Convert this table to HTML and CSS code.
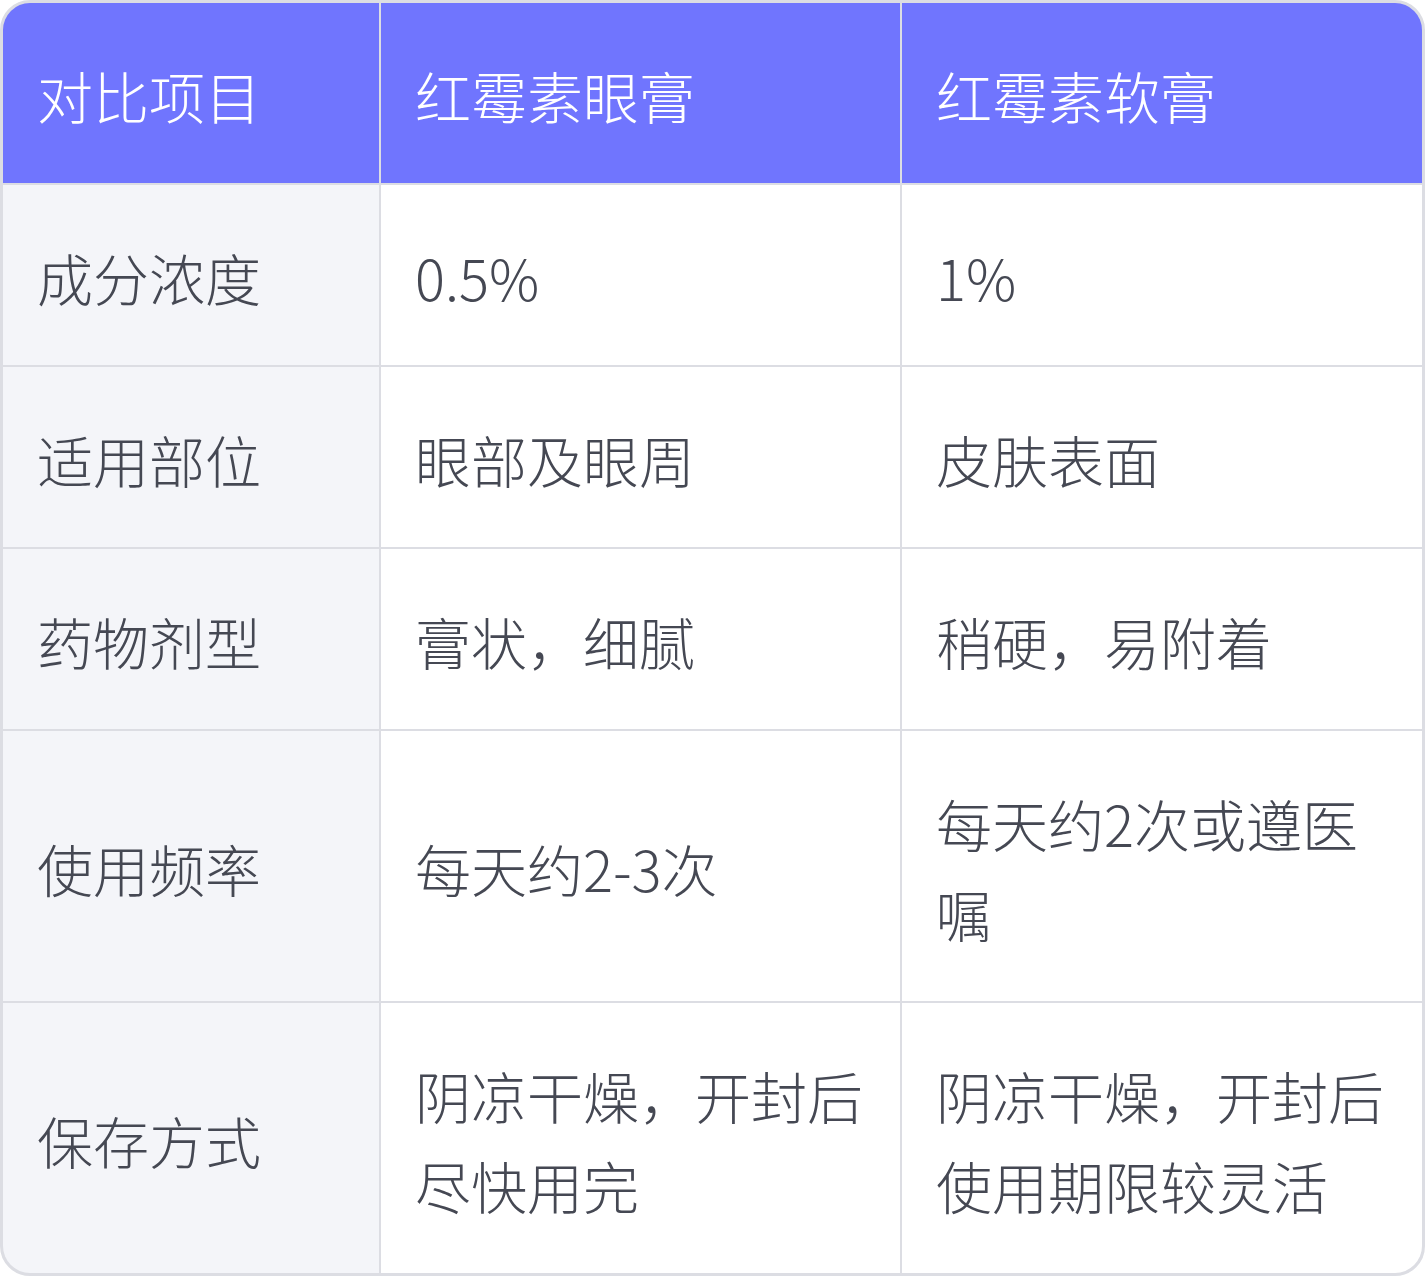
FILE: index.html
```html
<!DOCTYPE html>
<html lang="zh-CN">
<head>
<meta charset="utf-8">
<title>红霉素眼膏与软膏对比</title>
<link rel="stylesheet" href="styles.css">
</head>
<body>
<div class="table">
  <div class="cell head">对比项目</div>
  <div class="cell head">红霉素眼膏</div>
  <div class="cell head">红霉素软膏</div>

  <div class="cell label">成分浓度</div>
  <div class="cell">0.5%</div>
  <div class="cell">1%</div>

  <div class="cell label">适用部位</div>
  <div class="cell">眼部及眼周</div>
  <div class="cell">皮肤表面</div>

  <div class="cell label">药物剂型</div>
  <div class="cell">膏状，细腻</div>
  <div class="cell">稍硬，易附着</div>

  <div class="cell label">使用频率</div>
  <div class="cell">每天约2-3次</div>
  <div class="cell">每天约2次或遵医嘱</div>

  <div class="cell label">保存方式</div>
  <div class="cell">阴凉干燥，开封后尽快用完</div>
  <div class="cell">阴凉干燥，开封后使用期限较灵活</div>
</div>
</body>
</html>
```

FILE: styles.css
```css
html, body {
  margin: 0;
  padding: 0;
  background: #ffffff;
}

.table {
  box-sizing: border-box;
  width: 1425px;
  height: 1276px;
  border: 3px solid #dcdde3;
  border-radius: 30px;
  overflow: hidden;
  display: grid;
  grid-template-columns: 376px 519px 520px;
  grid-template-rows: 180px 180px 180px 180px 270px 270px;
  gap: 2px;
  background: #dcdde3;
  font-family: "Noto Sans CJK SC", "Noto Sans", sans-serif;
  font-weight: 300;
  font-size: 56px;
  line-height: 90px;
  color: #454853;
}

.cell {
  background: #ffffff;
  padding: 3px 34px 0 34px;
  display: flex;
  align-items: center;
}

.head {
  background: #7075fe;
  color: #ffffff;
}

.label {
  background: #f4f5f9;
}
```
